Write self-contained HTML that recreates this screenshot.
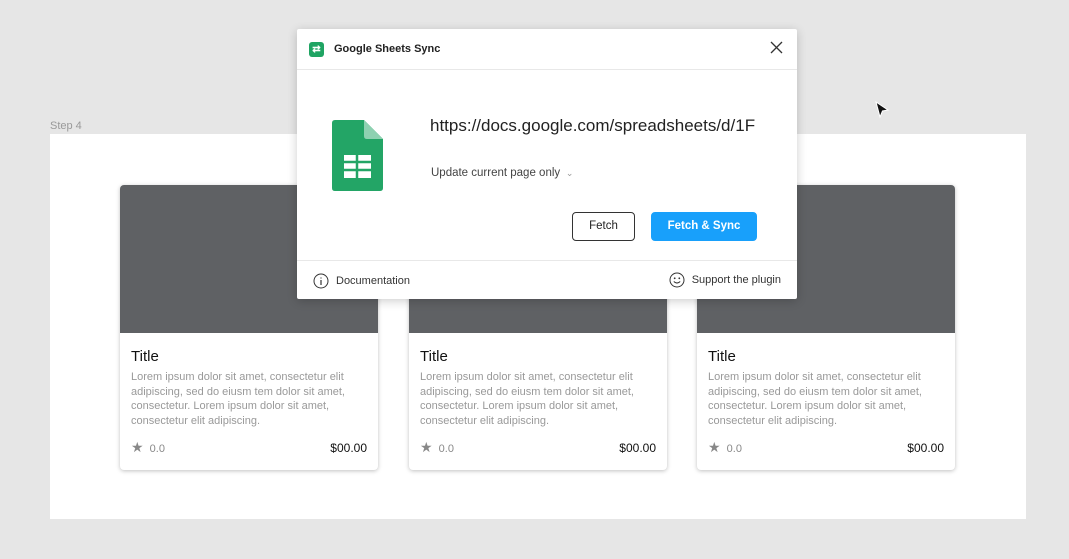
<!DOCTYPE html>
<html><head><meta charset="utf-8"><style>
*{margin:0;padding:0;box-sizing:border-box}
body{width:1069px;height:559px;background:#e6e6e6;font-family:"Liberation Sans",sans-serif;position:relative;overflow:hidden}
.step{position:absolute;left:50px;top:120px;font-size:11px;color:#999}
.frame{position:absolute;left:50px;top:134px;width:976px;height:385px;background:#fff}
.card{position:absolute;top:185px;width:258px;height:285px;background:#fff;border-radius:4px;box-shadow:0 1px 4px rgba(0,0,0,.25);overflow:hidden}
.card .img{height:148px;background:#5f6164}
.card h3{font-weight:normal;font-size:15px;color:#111;margin:15px 11px 5px}
.card p{font-size:11px;line-height:14.6px;color:#999;margin:0 11px}
.card .ft{position:absolute;left:11px;right:11px;bottom:14px;font-size:11px;color:#888;display:flex;justify-content:space-between;align-items:center}
.card .ft b{font-weight:normal;color:#111;font-size:12px}
.modal{position:absolute;left:297px;top:29px;width:500px;height:270px;background:#fff;border-radius:2px;box-shadow:0 2px 10px rgba(0,0,0,.2)}
.hd{height:41px;border-bottom:1px solid #e8e8e8;display:flex;align-items:center;padding-left:12px;font-size:11px;font-weight:bold;color:#222}
.ic{width:15px;height:15px;background:#1fa463;border-radius:3px;margin-right:10px;color:#fff;font-size:10px;text-align:center;line-height:15px}
.x{position:absolute;right:14px;top:12px}
.url{position:absolute;left:133px;top:87px;font-size:17px;color:#222;width:330px;overflow:hidden;white-space:nowrap}
.upd{position:absolute;left:134px;top:138px;font-size:11.5px;color:#444}
.btn{position:absolute;top:183px;height:29px;border-radius:4px;font-size:11.5px;text-align:center;line-height:27px}
.f1{left:275px;width:63px;border:1px solid #333;color:#222}
.f2{left:354px;width:106px;background:#18a0fb;color:#fff;font-weight:bold;border:1px solid #18a0fb}
.bot{position:absolute;left:0;right:0;top:231px;border-top:1px solid #e8e8e8;height:39px;font-size:11px;color:#333}
.bot .l{position:absolute;left:16px;top:12px;display:flex;align-items:center;gap:7px}
.bot .r{position:absolute;right:16px;top:11px;display:flex;align-items:center;gap:7px}
</style></head><body>
<div class="step">Step 4</div>
<div class="frame"></div>
<div class="card" style="left:120px"><div class="img"></div><h3>Title</h3><p>Lorem ipsum dolor sit amet, consectetur elit adipiscing, sed do eiusm tem dolor sit amet, consectetur. Lorem ipsum dolor sit amet, consectetur elit adipiscing.</p><div class="ft"><span><span style="color:#888;font-size:14px">★</span>&nbsp; 0.0</span><b>$00.00</b></div></div>
<div class="card" style="left:409px"><div class="img"></div><h3>Title</h3><p>Lorem ipsum dolor sit amet, consectetur elit adipiscing, sed do eiusm tem dolor sit amet, consectetur. Lorem ipsum dolor sit amet, consectetur elit adipiscing.</p><div class="ft"><span><span style="color:#888;font-size:14px">★</span>&nbsp; 0.0</span><b>$00.00</b></div></div>
<div class="card" style="left:697px"><div class="img"></div><h3>Title</h3><p>Lorem ipsum dolor sit amet, consectetur elit adipiscing, sed do eiusm tem dolor sit amet, consectetur. Lorem ipsum dolor sit amet, consectetur elit adipiscing.</p><div class="ft"><span><span style="color:#888;font-size:14px">★</span>&nbsp; 0.0</span><b>$00.00</b></div></div>
<div class="modal">
<div class="hd"><div class="ic">⇄</div>Google Sheets Sync</div>
<svg class="x" width="13" height="13" viewBox="0 0 13 13"><path d="M1 1L12 12M12 1L1 12" stroke="#333" stroke-width="1.3"/></svg>
<svg style="position:absolute;left:35px;top:91px" width="52" height="71" viewBox="0 0 52 71"><path d="M3 0H32L51 19V68Q51 71 48 71H3Q0 71 0 68V3Q0 0 3 0Z" fill="#23a566"/><path d="M32 0L51 19H35Q32 19 32 16Z" fill="#8ed1b1"/><rect x="12" y="35" width="27" height="23" fill="#fff"/><path d="M12 42H39M12 50H39M25 35V58" stroke="#23a566" stroke-width="2.5"/></svg>
<div class="url">https://docs.google.com/spreadsheets/d/1F</div>
<div class="upd">Update current page only <span style="color:#999;font-size:9px">&nbsp;⌄</span></div>
<div class="btn f1">Fetch</div>
<div class="btn f2">Fetch &amp; Sync</div>
<div class="bot">
<div class="l"><svg width="16" height="16" viewBox="0 0 16 16"><circle cx="8" cy="8" r="7" fill="none" stroke="#333"/><path d="M8 7V12M8 4.5V5.5" stroke="#333" stroke-width="1.2"/></svg>Documentation</div>
<div class="r"><svg width="16" height="16" viewBox="0 0 16 16"><circle cx="8" cy="8" r="7" fill="none" stroke="#333"/><circle cx="5.7" cy="6.3" r=".9" fill="#333"/><circle cx="10.3" cy="6.3" r=".9" fill="#333"/><path d="M4.8 9.5Q8 12.6 11.2 9.5" fill="none" stroke="#333"/></svg>Support the plugin</div>
</div>
</div>
<svg style="position:absolute;left:875px;top:101px" width="16" height="18" viewBox="0 0 16 18"><path d="M1 1L13 9L7.5 10L5 16Z" fill="#111" stroke="#fff" stroke-width="1"/></svg>
</body></html>
